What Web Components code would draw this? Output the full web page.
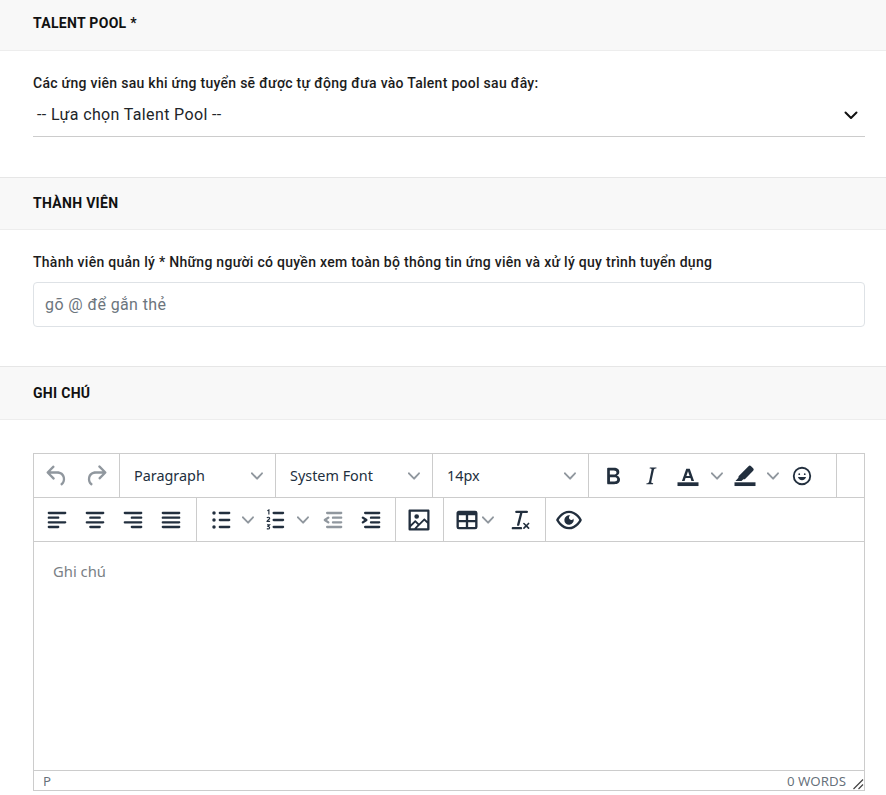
<!DOCTYPE html>
<html lang="vi"><head><meta charset="utf-8"><title>Talent Pool</title>
<style>
html,body{margin:0;padding:0;background:#fff;overflow:hidden}
body{font-family:Roboto,"Noto Sans",sans-serif;color:#212529}
</style></head>
<body>
<rt-section first title-text="TALENT POOL *" style="--body-h:126px">
  <rt-label>Các ứng viên sau khi ứng tuyển sẽ được tự động đưa vào Talent pool sau đây:</rt-label>
  <rt-select>-- Lựa chọn Talent Pool --</rt-select>
</rt-section>
<rt-section title-text="THÀNH VIÊN" style="--body-h:136px">
  <rt-label>Thành viên quản lý * Những người có quyền xem toàn bộ thông tin ứng viên và xử lý quy trình tuyển dụng</rt-label>
  <rt-input>gõ @ để gắn thẻ</rt-input>
</rt-section>
<rt-section last title-text="GHI CHÚ">
  <rt-editor></rt-editor>
</rt-section>
<script>
const ICONS={
undo:'<path d="M6.4 8H12c3.7 0 6.2 2 6.8 5.1.6 2.7-.4 5.6-2.3 6.8a1 1 0 0 1-1-1.8c1.1-.6 1.8-2.7 1.4-4.6-.5-2.1-2.1-3.5-4.9-3.5H6.4l3.3 3.3a1 1 0 1 1-1.4 1.4l-5-5a1 1 0 0 1 0-1.4l5-5a1 1 0 0 1 1.4 1.4L6.4 8z"/>',
redo:'<path d="M17.6 10H12c-2.8 0-4.4 1.4-4.9 3.5-.4 2 .3 4 1.4 4.6a1 1 0 1 1-1 1.8c-2-1.2-2.9-4.1-2.3-6.8.6-3 3-5.1 6.8-5.1h5.6l-3.3-3.3a1 1 0 1 1 1.4-1.4l5 5a1 1 0 0 1 0 1.4l-5 5a1 1 0 0 1-1.4-1.4l3.3-3.3z"/>',
bold:'<path d="M7.8 19c-.3 0-.5 0-.6-.2l-.2-.5V5.7c0-.2 0-.4.2-.5l.6-.2h5c1.5 0 2.7.3 3.5 1 .7.6 1.1 1.4 1.1 2.5a3 3 0 0 1-.6 1.9c-.4.6-1 1-1.6 1.2.4.1.9.3 1.3.6s.8.7 1 1.2c.4.4.5 1 .5 1.6 0 1.3-.4 2.3-1.3 3-.8.7-2.1 1-3.8 1H7.8zm5-8.3c.6 0 1.2-.1 1.6-.5.4-.3.6-.7.6-1.3 0-1.1-.8-1.7-2.3-1.7H9.3v3.5h3.4zm.5 6c.7 0 1.3-.1 1.7-.4.4-.4.6-.9.6-1.5s-.2-1-.7-1.4c-.4-.3-1-.4-2-.4H9.4v3.8h4z"/>',
italic:'<path d="M16.7 4.7l-.1.9h-.3c-.6 0-1 0-1.4.3-.3.3-.4.6-.5 1.1l-2.1 9.8v.6c0 .5.4.8 1.4.8h.2l-.2.8H8l.2-.8h.2c1.1 0 1.8-.5 2-1.5l2-9.8.1-.5c0-.6-.4-.8-1.4-.8h-.3l.2-.9h5.8z"/>',
color:'<path d="M3 17.4h18v3.2H3z"/><path fill-rule="evenodd" d="M10.5 5.8h3l3.7 10.4h-2.3l-.8-2.4H9.9l-.8 2.4H6.8zM10.6 11.9h2.8l-1.4-4z"/>',
pen:'<path d="M3 17.4h18v3.2H3z"/><path d="M15 3.6a1.6 1.6 0 0 1 2.2 0l1.8 1.8a1.6 1.6 0 0 1 0 2.2l-6.7 6.8c-.5.5-1.1.5-1.7.3L9 16.3H3.8l2.6-2.7c-.2-.6-.1-1.2.3-1.7z"/>',
emoji:'<path d="M9 11c.6 0 1-.4 1-1s-.4-1-1-1-1 .4-1 1 .4 1 1 1zm6 0c.6 0 1-.4 1-1s-.4-1-1-1-1 .4-1 1 .4 1 1 1zm-3 5.5c2.1 0 4-1.5 4.4-3.5H7.6c.5 2 2.3 3.5 4.4 3.5zM12 22a10 10 0 1 1 0-20 10 10 0 0 1 0 20zm0-2a8 8 0 1 0 0-16 8 8 0 0 0 0 16z"/>',
left:'<path d="M5 5h14c.6 0 1 .4 1 1s-.4 1-1 1H5a1 1 0 1 1 0-2zm0 4h8c.6 0 1 .4 1 1s-.4 1-1 1H5a1 1 0 1 1 0-2zm0 8h8c.6 0 1 .4 1 1s-.4 1-1 1H5a1 1 0 0 1 0-2zm0-4h14c.6 0 1 .4 1 1s-.4 1-1 1H5a1 1 0 0 1 0-2z"/>',
center:'<path d="M5 5h14c.6 0 1 .4 1 1s-.4 1-1 1H5a1 1 0 1 1 0-2zm3 4h8c.6 0 1 .4 1 1s-.4 1-1 1H8a1 1 0 1 1 0-2zm0 8h8c.6 0 1 .4 1 1s-.4 1-1 1H8a1 1 0 0 1 0-2zm-3-4h14c.6 0 1 .4 1 1s-.4 1-1 1H5a1 1 0 0 1 0-2z"/>',
right:'<path d="M5 5h14c.6 0 1 .4 1 1s-.4 1-1 1H5a1 1 0 1 1 0-2zm6 4h8c.6 0 1 .4 1 1s-.4 1-1 1h-8a1 1 0 0 1 0-2zm0 8h8c.6 0 1 .4 1 1s-.4 1-1 1h-8a1 1 0 0 1 0-2zm-6-4h14c.6 0 1 .4 1 1s-.4 1-1 1H5a1 1 0 0 1 0-2z"/>',
justify:'<path d="M5 5h14c.6 0 1 .4 1 1s-.4 1-1 1H5a1 1 0 1 1 0-2zm0 4h14c.6 0 1 .4 1 1s-.4 1-1 1H5a1 1 0 1 1 0-2zm0 4h14c.6 0 1 .4 1 1s-.4 1-1 1H5a1 1 0 0 1 0-2zm0 4h14c.6 0 1 .4 1 1s-.4 1-1 1H5a1 1 0 0 1 0-2z"/>',
ul:'<path d="M11 5h8c.6 0 1 .4 1 1s-.4 1-1 1h-8a1 1 0 0 1 0-2zm0 6h8c.6 0 1 .4 1 1s-.4 1-1 1h-8a1 1 0 0 1 0-2zm0 6h8c.6 0 1 .4 1 1s-.4 1-1 1h-8a1 1 0 0 1 0-2z"/><circle cx="6" cy="6" r="1.5"/><circle cx="6" cy="12" r="1.5"/><circle cx="6" cy="18" r="1.5"/>',
ol:'<path d="M10 17h8c.6 0 1 .4 1 1s-.4 1-1 1h-8a1 1 0 0 1 0-2zm0-6h8c.6 0 1 .4 1 1s-.4 1-1 1h-8a1 1 0 0 1 0-2zm0-6h8c.6 0 1 .4 1 1s-.4 1-1 1h-8a1 1 0 1 1 0-2z"/><path fill="none" stroke="currentColor" stroke-width="1" d="M4.6 4.1l1.3-.7v3.9M4.3 10.3c.3-.9 2.3-.9 2.3.2 0 1-2.3 1.5-2.3 2.7h2.6M4.3 16.2h2.2l-1.2 1.3c1.6 0 1.6 2.2-.1 2.2-.5 0-.8-.2-1-.4"/>',
outdent:'<path d="M7 5h12c.6 0 1 .4 1 1s-.4 1-1 1H7a1 1 0 1 1 0-2zm5 4h7c.6 0 1 .4 1 1s-.4 1-1 1h-7a1 1 0 0 1 0-2zm0 4h7c.6 0 1 .4 1 1s-.4 1-1 1h-7a1 1 0 0 1 0-2zm-5 4h12a1 1 0 0 1 0 2H7a1 1 0 0 1 0-2zm1.6-3.8a1 1 0 0 1-1.2 1.6l-3-2a1 1 0 0 1 0-1.6l3-2a1 1 0 0 1 1.2 1.6L6.8 12l1.8 1.2z"/>',
indent:'<path d="M7 5h12c.6 0 1 .4 1 1s-.4 1-1 1H7a1 1 0 1 1 0-2zm5 4h7c.6 0 1 .4 1 1s-.4 1-1 1h-7a1 1 0 0 1 0-2zm0 4h7c.6 0 1 .4 1 1s-.4 1-1 1h-7a1 1 0 0 1 0-2zm-5 4h12a1 1 0 0 1 0 2H7a1 1 0 0 1 0-2zm-2.6-3.8L6.2 12l-1.8-1.2a1 1 0 0 1 1.2-1.6l3 2a1 1 0 0 1 0 1.6l-3 2a1 1 0 1 1-1.2-1.6z"/>',
image:'<path d="M5 15.7l3.3-3.2c.3-.3.7-.3 1 0L12 15l4.1-4c.3-.4.8-.4 1 0l2 1.9V5H5v10.7zM5 18V19h3l2.8-2.9-2-2L5 17.9zm14-3l-2.5-2.4-6.4 6.5H19v-4zM4 3h16c.6 0 1 .4 1 1v16c0 .6-.4 1-1 1H4a1 1 0 0 1-1-1V4c0-.6.4-1 1-1zm6 8a2 2 0 1 0 0-4 2 2 0 0 0 0 4z"/>',
table:'<path d="M19 4a2 2 0 0 1 2 2v12a2 2 0 0 1-2 2H5a2 2 0 0 1-2-2V6c0-1.1.9-2 2-2h14zM5 14v4h6v-4H5zm14 0h-6v4h6v-4zm0-6h-6v4h6V8zM5 12h6V8H5v4z"/>',
clear:'<path d="M13.2 6a1 1 0 0 1 0 .2l-2.6 10a1 1 0 0 1-1 .8h-.2a.8.8 0 0 1-.8-1l2.6-10H8a1 1 0 1 1 0-2h9a1 1 0 0 1 0 2h-3.8zM5 18h7a1 1 0 0 1 0 2H5a1 1 0 0 1 0-2zm13 1.5L16.5 18 15 19.5a.7.7 0 0 1-1-1l1.5-1.5-1.5-1.5a.7.7 0 0 1 1-1l1.5 1.5 1.5-1.5a.7.7 0 0 1 1 1L17.5 17l1.5 1.5a.7.7 0 0 1-1 1z"/>',
eye:'<path d="M3.5 12.5c.5.8 1.1 1.6 1.8 2.3 2 2 4.2 3.2 6.7 3.2s4.7-1.2 6.7-3.2a16.2 16.2 0 0 0 2.1-2.8 15.7 15.7 0 0 0-2.1-2.8c-2-2-4.2-3.2-6.7-3.2a9.3 9.3 0 0 0-6.7 3.2A16.2 16.2 0 0 0 3.2 12c0 .2.2.3.3.5zm-2.4-1l.7-1.2L4 7.8C6.2 5.4 8.9 4 12 4c3 0 5.8 1.4 8.1 3.8a18.2 18.2 0 0 1 2.8 3.7v1l-.7 1.2-2.1 2.5c-2.3 2.4-5 3.8-8.1 3.8a11.3 11.3 0 0 1-8.1-3.8 18.2 18.2 0 0 1-2.8-3.7 1 1 0 0 1 0-1zm12-3.3a2 2 0 1 0 2.7 2.6 4 4 0 1 1-2.7-2.6z"/>'
};
const CHEV='<svg width="12" height="12" viewBox="0 0 10 10" fill="currentColor" style="display:block"><path d="M8.7 2.2c.3-.3.8-.3 1 0 .4.4.4.9 0 1.2L5.7 7.8c-.3.3-.9.3-1.2 0L.2 3.4a.8.8 0 0 1 0-1.2c.3-.3.8-.3 1.1 0L5 6l3.7-3.8z"/></svg>';
function def(name,html,init){
  customElements.define(name,class extends HTMLElement{
    constructor(){super();this.attachShadow({mode:'open'}).innerHTML=html;}
    connectedCallback(){if(init)init(this);}
  });
}
def('rt-section',`<style>
:host{display:block}
.h{box-sizing:border-box;height:53px;background:#f8f8f8;border-top:1px solid #e6e6e6;border-bottom:1px solid #ededed;padding:0 33px 2px;display:flex;align-items:center;font:700 14px/20px Roboto,sans-serif;letter-spacing:.3px;color:#111}
:host([first]) .h{height:51px;border-top:0;padding-bottom:4px}
:host([last]) .h{height:54px;padding-bottom:1px}
.b{box-sizing:border-box;height:var(--body-h,auto);padding:22px 21px 0 33px}
</style><div class="h"></div><div class="b"><slot></slot></div>`,el=>{el.shadowRoot.querySelector('.h').textContent=el.getAttribute('title-text');});
def('rt-label',`<style>:host{display:block;font:500 14px/21px Roboto,sans-serif;letter-spacing:.28px;color:#1c1c1c}</style><slot></slot>`);
def('rt-select',`<style>
:host{display:flex;align-items:center;justify-content:space-between;box-sizing:border-box;height:43px;padding:0 6px 1px 4px;border-bottom:1px solid #ccc;font:400 16px/24px Roboto,sans-serif;letter-spacing:.36px;color:#212529}
svg{display:block}
</style><span><slot></slot></span><svg width="16" height="16" viewBox="0 0 16 16" fill="none" stroke="#111" stroke-width="2" stroke-linecap="round" stroke-linejoin="round"><path d="M2.5 5.5L8 11l5.5-5.5"/></svg>`);
def('rt-input',`<style>
:host{display:flex;align-items:center;box-sizing:border-box;height:45px;margin-top:9px;padding:0 11px;border:1px solid #dee2e6;border-radius:4px;font:400 16px/24px Roboto,sans-serif;letter-spacing:.4px;color:#6c757d}
</style><slot></slot>`);
def('rt-group',`<style>
:host{display:flex;align-items:center;box-sizing:border-box;height:100%;border-right:1px solid #ccc;flex:none}
</style><slot></slot>`,el=>{
  el.style.width=el.getAttribute('w')+'px';
  el.style.paddingLeft=(el.getAttribute('pl')||4)+'px';
});
def('rt-tool',`<style>
:host{display:flex;align-items:center;justify-content:center;flex:none;height:100%;color:#222f3e}
:host([off]){color:rgba(34,47,62,.5)}
svg{display:block;fill:currentColor}
</style><svg width="28" height="28" viewBox="0 0 24 24"></svg>`,el=>{
  el.style.width=el.getAttribute('w')+'px';
  if(el.hasAttribute('ml'))el.style.marginLeft=el.getAttribute('ml')+'px';
  const s=el.shadowRoot.querySelector('svg');
  if(el.hasAttribute('s')){s.setAttribute('width',el.getAttribute('s'));s.setAttribute('height',el.getAttribute('s'));}
  s.innerHTML=ICONS[el.getAttribute('i')];
});
def('rt-chev',`<style>
:host{display:flex;align-items:center;justify-content:center;flex:none;height:100%;color:rgba(34,47,62,.5)}
</style>${CHEV}`,el=>{
  el.style.width=el.getAttribute('w')+'px';
  if(el.hasAttribute('ml'))el.style.marginLeft=el.getAttribute('ml')+'px';
});
def('rt-combo',`<style>
:host{display:flex;align-items:center;justify-content:space-between;box-sizing:border-box;height:100%;flex:none;border-right:1px solid #ccc;padding:0 12px 0 14px;font:400 14.4px/20px "Noto Sans","Open Sans",sans-serif;color:#222f3e}
</style><span><slot></slot></span><rt-chev w="12"></rt-chev>`,el=>{el.style.width=el.getAttribute('w')+'px';});
def('rt-row',`<style>
:host{display:flex;box-sizing:border-box;height:44px;border-bottom:1px solid #ccc}
</style><slot></slot>`);
def('rt-editor',`<style>
:host{display:flex;flex-direction:column;box-sizing:border-box;height:338px;margin-top:11px;border:1px solid #ccc;background:#fff}
.c{flex:1;padding:19px 19px;font:400 14.8px/20px "Noto Sans","Open Sans",sans-serif;color:#7a7f85}
.s{display:flex;align-items:center;justify-content:space-between;height:18px;border-top:1px solid #ccc;padding:1px 18px 0 9px;box-sizing:content-box;position:relative;font:400 13.3px/18px "Noto Sans","Open Sans",sans-serif;color:rgba(34,47,62,.7)}
.g{position:absolute;right:0;bottom:0;display:block}
</style>
<rt-row>
  <rt-group w="86"><rt-tool i="undo" w="38" off></rt-tool><rt-tool i="redo" w="40" off></rt-tool></rt-group>
  <rt-combo w="156">Paragraph</rt-combo>
  <rt-combo w="157">System Font</rt-combo>
  <rt-combo w="156">14px</rt-combo>
  <rt-group w="248" pl="5"><rt-tool i="bold" w="38"></rt-tool><rt-tool i="italic" w="38"></rt-tool><rt-tool i="color" w="36"></rt-tool><rt-chev w="14" ml="4"></rt-chev><rt-tool i="pen" w="36" ml="3"></rt-tool><rt-chev w="14" ml="3"></rt-chev><rt-tool i="emoji" w="38" ml="3" s="22"></rt-tool></rt-group>
</rt-row>
<rt-row>
  <rt-group w="163"><rt-tool i="left" w="38"></rt-tool><rt-tool i="center" w="38"></rt-tool><rt-tool i="right" w="38"></rt-tool><rt-tool i="justify" w="38"></rt-tool></rt-group>
  <rt-group w="199"><rt-tool i="ul" w="40"></rt-tool><rt-chev w="14"></rt-chev><rt-tool i="ol" w="41"></rt-tool><rt-chev w="14"></rt-chev><rt-tool i="outdent" w="38" ml="4" off></rt-tool><rt-tool i="indent" w="38"></rt-tool></rt-group>
  <rt-group w="48"><rt-tool i="image" w="38"></rt-tool></rt-group>
  <rt-group w="102" pl="8"><rt-tool i="table" w="30"></rt-tool><rt-chev w="12"></rt-chev><rt-tool i="clear" w="38" ml="8"></rt-tool></rt-group>
  <rt-tool i="eye" w="38" ml="4"></rt-tool>
</rt-row>
<div class="c">Ghi chú</div>
<div class="s"><span>P</span><span>0 WORDS</span>
<svg class="g" width="12" height="12" viewBox="0 0 12 12" fill="none" stroke="#444" stroke-width="1.2"><path d="M1.5 11L11 1.5M6.5 11L11 6.5"/></svg></div>`);
</script>
</body></html>
